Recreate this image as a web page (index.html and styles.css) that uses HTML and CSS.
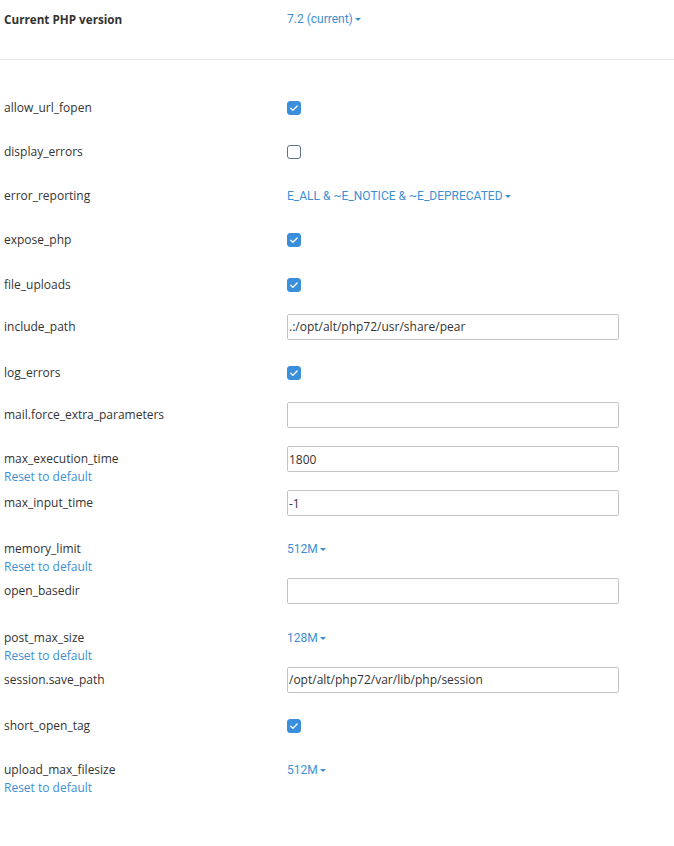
FILE: index.html
```html
<!DOCTYPE html>
<html>
<head>
<meta charset="utf-8">
<link rel="stylesheet" href="styles.css">
</head>
<body>
<div class="page">
  <div class="header">
    <div class="label bold">Current PHP version</div>
    <div class="value"><span class="dd">7.2 (current)<span class="caret"></span></span></div>
  </div>
  <div class="list">
    <div class="row"><div class="label">allow_url_fopen</div><div class="value"><span class="cb on"><svg viewBox="0 0 14 14"><path d="M3.2 7.2l2.5 2.5 5-5" /></svg></span></div></div>
    <div class="row"><div class="label">display_errors</div><div class="value"><span class="cb"></span></div></div>
    <div class="row"><div class="label">error_reporting</div><div class="value"><span class="dd">E_ALL &amp; ~E_NOTICE &amp; ~E_DEPRECATED<span class="caret"></span></span></div></div>
    <div class="row"><div class="label">expose_php</div><div class="value"><span class="cb on"><svg viewBox="0 0 14 14"><path d="M3.2 7.2l2.5 2.5 5-5" /></svg></span></div></div>
    <div class="row"><div class="label">file_uploads</div><div class="value"><span class="cb on"><svg viewBox="0 0 14 14"><path d="M3.2 7.2l2.5 2.5 5-5" /></svg></span></div></div>
    <div class="row text"><div class="label">include_path</div><div class="value"><input class="inp" type="text" value=".:/opt/alt/php72/usr/share/pear"></div></div>
    <div class="row"><div class="label">log_errors</div><div class="value"><span class="cb on"><svg viewBox="0 0 14 14"><path d="M3.2 7.2l2.5 2.5 5-5" /></svg></span></div></div>
    <div class="row text"><div class="label">mail.force_extra_parameters</div><div class="value"><input class="inp" type="text" value=""></div></div>
    <div class="row text"><div class="label">max_execution_time<a class="reset">Reset to default</a></div><div class="value"><input class="inp" type="text" value="1800"></div></div>
    <div class="row text"><div class="label">max_input_time</div><div class="value"><input class="inp" type="text" value="-1"></div></div>
    <div class="row"><div class="label">memory_limit<a class="reset">Reset to default</a></div><div class="value"><span class="dd">512M<span class="caret"></span></span></div></div>
    <div class="row text"><div class="label">open_basedir</div><div class="value"><input class="inp" type="text" value=""></div></div>
    <div class="row"><div class="label">post_max_size<a class="reset">Reset to default</a></div><div class="value"><span class="dd">128M<span class="caret"></span></span></div></div>
    <div class="row text"><div class="label">session.save_path</div><div class="value"><input class="inp" type="text" value="/opt/alt/php72/var/lib/php/session"></div></div>
    <div class="row"><div class="label">short_open_tag</div><div class="value"><span class="cb on"><svg viewBox="0 0 14 14"><path d="M3.2 7.2l2.5 2.5 5-5" /></svg></span></div></div>
    <div class="row"><div class="label">upload_max_filesize<a class="reset">Reset to default</a></div><div class="value"><span class="dd">512M<span class="caret"></span></span></div></div>
  </div>
</div>
</body>
</html>
```
FILE: styles.css
```css
html, body {
  margin: 0;
  padding: 0;
  background: #fff;
}
.page {
  font-family: "Open Sans", "Liberation Sans", sans-serif;
  font-size: 12px;
  color: #333;
}
.header {
  display: grid;
  grid-template-columns: 287px 1fr;
  align-items: start;
  height: 60px;
  border-bottom: 1px solid #e8e8e8;
  box-sizing: border-box;
  padding-top: 10px;
}
.bold {
  font-weight: 700;
  font-size: 11.7px;
}
.label {
  padding-left: 4px;
  line-height: 18px;
  display: flex;
  flex-direction: column;
  align-items: flex-start;
}
.list {
  padding-top: 35px;
}
.row {
  display: grid;
  grid-template-columns: 287px 332px;
  height: 44.13px;
  align-items: start;
}
.row .label {
  padding-top: 4px;
}
.row.text .label,
.row.text .value {
  margin-top: -2px;
}
.value {
  display: flex;
  align-items: center;
  min-height: 26px;
}
.header .value {
  min-height: 18px;
}
.reset {
  color: #3d8fd4;
  cursor: pointer;
}
.dd {
  font-family: Roboto, "Liberation Sans", sans-serif;
  font-size: 12px;
  color: #3d8fd4;
  line-height: 18px;
  display: inline-flex;
  align-items: center;
}
.caret {
  display: inline-block;
  width: 0;
  height: 0;
  border-left: 3px solid transparent;
  border-right: 3px solid transparent;
  border-top: 3px solid #3d8fd4;
  margin-left: 2px;
  margin-top: 1px;
}
.cb {
  width: 14px;
  height: 14px;
  box-sizing: border-box;
  border: 1px solid #5c7486;
  border-radius: 3px;
  background: #fff;
  display: inline-block;
}
.cb.on {
  background: #3a8fdd;
  border-color: #3a8fdd;
}
.cb svg {
  display: block;
  width: 12px;
  height: 12px;
}
.cb svg path {
  fill: none;
  stroke: #fff;
  stroke-width: 1.5;
  stroke-linecap: round;
  stroke-linejoin: round;
}
.inp {
  width: 332px;
  height: 26px;
  box-sizing: border-box;
  border: 1px solid #c4c4c4;
  border-radius: 2px;
  padding: 0 1px;
  font-family: "Open Sans", "Liberation Sans", sans-serif;
  font-size: 12px;
  color: #333;
  outline: none;
  margin: 0;
}
```
